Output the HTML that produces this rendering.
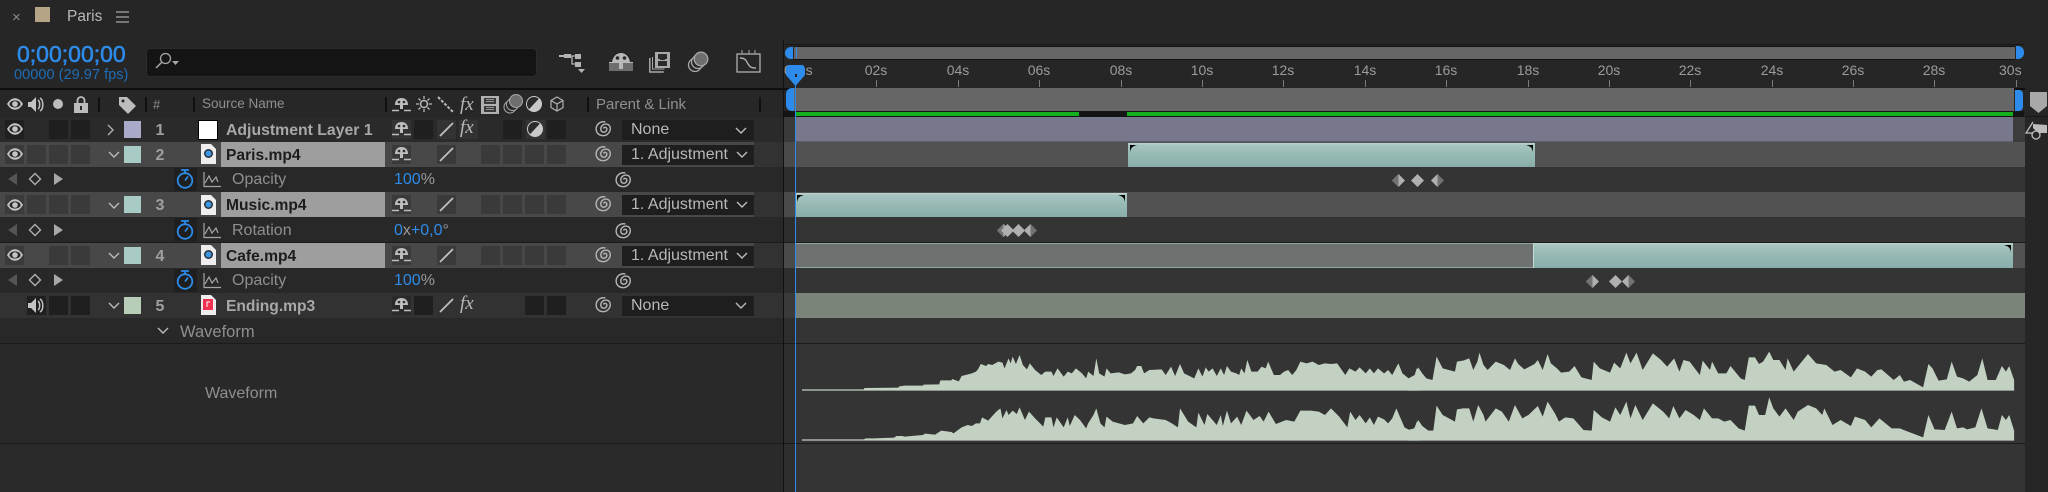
<!DOCTYPE html>
<html><head><meta charset="utf-8"><title>Paris</title>
<style>
html,body{margin:0;padding:0;background:#262626;width:2048px;height:492px;overflow:hidden}
body{position:relative;font-family:"Liberation Sans",sans-serif;color:#a0a0a0}
div,span,svg{position:absolute;display:block}
.t{white-space:nowrap;line-height:1}
.row{left:0;width:2025px;height:25px;border-bottom:1px solid #1b1b1b}
.sel{background:#484848}.prop{background:#282828}
.tl{left:795px;width:1218px;height:25px;top:0}
.box{width:19px;height:19px;top:3px;background:#3a3a3a}
.dk{background:#1f1f1f}
.num{left:153px;top:5px;font-size:16px;font-weight:bold;color:#a0a0a0;width:14px;text-align:center}
.lab{left:124px;top:4px;width:17px;height:17px}
.hl{left:221px;top:0;width:164px;height:25px;background:#9e9e9e}
.name{left:226px;top:5px;font-size:15.600px;font-weight:bold;color:#1c1c1c}
.dd{left:622px;top:3px;width:132px;height:20px;background:#1e1e1e;color:#b8b8b8;font-size:16px;line-height:20px;text-indent:9px;white-space:nowrap;overflow:hidden}
.pn{left:232px;top:5px;font-size:16px;color:#8f8f8f}
.teal{background:linear-gradient(#c0d4d0 0,#a6c5c0 2px,#9abcb7 40%,#88adaa 100%)}
.tick{top:80px;width:1px;height:7px;background:#7c7c7c}
.lb{top:63px;font-size:14px;color:#9b9b9b;width:40px;text-align:center;line-height:14px}
</style></head><body>
<svg width="0" height="0" style="left:0;top:0"><defs>
<symbol id="eye" viewBox="0 0 16 12"><path d="M0 6C3 1 6 .3 8 .3S13 1 16 6C13 11 10 11.7 8 11.7S3 11 0 6Z" fill="#c4c4c4"/><ellipse cx="8" cy="6" rx="5.600" ry="3.600" fill="#2a2a2a"/><circle cx="8" cy="6" r="2.800" fill="#c4c4c4"/></symbol>
<symbol id="spk" viewBox="0 0 17 17"><path d="M0 6h3l5-5v15l-5-5H0Z" fill="#c4c4c4"/><path d="M10 4c2 1.500 2.500 7 0 9M12 2c3.500 2 4 11 0 13" fill="none" stroke="#c4c4c4" stroke-width="1.500"/></symbol>
<symbol id="shy" viewBox="0 0 19 16"><path d="M3 8C3 3 6 1 9.500 1S16 3 16 8Z" fill="#bdbdbd"/><circle cx="7" cy="5" r="1.300" fill="#2a2a2a"/><circle cx="12" cy="5" r="1.300" fill="#2a2a2a"/><path d="M8 7h3v5H8Z" fill="#bdbdbd"/><path d="M0 13.500h7M12 13.500h7" stroke="#bdbdbd" stroke-width="1.400"/></symbol>
<symbol id="sp" viewBox="0 0 18 18"><path d="M11 1.500C5 .5 1 4.500 1.200 9.500 1.500 14 5.500 16.700 10 16 14 15.300 17 11 16 7 15 3.500 10.500 2.800 7.800 5.200 5.300 7.500 5.600 11.500 8.500 12.300 11 13 13.300 10.500 12.300 8.300 11.500 6.700 9.500 7 9 8.500" fill="none" stroke="#b4b4b4" stroke-width="1.500"/></symbol>
<symbol id="slash" viewBox="0 0 19 19"><path d="M3 16L16 3" stroke="#c0c0c0" stroke-width="1.800"/></symbol>
<symbol id="dl" viewBox="0 0 13 13"><path d="M6.500 0L13 6.500 6.500 13 0 6.500Z" fill="#b0b0b0"/><path d="M6.500 0V13L0 6.500Z" fill="#727272"/></symbol>
<symbol id="dr" viewBox="0 0 13 13"><path d="M6.500 0L13 6.500 6.500 13 0 6.500Z" fill="#727272"/><path d="M6.500 0V13L0 6.500Z" fill="#b0b0b0"/></symbol>
<symbol id="df" viewBox="0 0 13 13"><path d="M6.500 0L13 6.500 6.500 13 0 6.500Z" fill="#b0b0b0"/></symbol>
<symbol id="nav" viewBox="0 0 56 14"><path d="M9 1L0 7l9 6Z" fill="#555"/><path d="M27 1.500l5.500 5.500-5.500 5.500-5.500-5.500Z" fill="none" stroke="#b0b0b0" stroke-width="1.400"/><path d="M46 1l9 6-9 6Z" fill="#a8a8a8"/></symbol>
<symbol id="sw" viewBox="0 0 18 20"><circle cx="9" cy="11.500" r="7.300" fill="none" stroke="#2d8ceb" stroke-width="1.800"/><path d="M5 1h8M9 1v3M9 11.500l3-4" stroke="#2d8ceb" stroke-width="1.700" fill="none"/></symbol>
<symbol id="gr" viewBox="0 0 18 16"><path d="M1 0v14.500h17M2 11l4-7 3 6 4-5 2 5" fill="none" stroke="#a6a6a6" stroke-width="1.200"/></symbol>
<symbol id="doc" viewBox="0 0 15 20"><path d="M0 0h10l5 5v15H0Z" fill="#eee"/><circle cx="7.500" cy="9.500" r="4.500" fill="#2a2f3a"/><circle cx="7.500" cy="9.500" r="3" fill="#3a97e0"/></symbol>
<symbol id="chd" viewBox="0 0 12 7"><path d="M1 1l5 5 5-5" fill="none" stroke="#bcbcbc" stroke-width="1.400"/></symbol>
<symbol id="half" viewBox="0 0 16 16"><circle cx="8" cy="8" r="7.500" fill="#c8c8c8"/><path d="M.5 8A7.500 7.500 0 0 1 13 2.500L2.800 13.500A7.500 7.500 0 0 1 .5 8Z" fill="#2a2a2a"/><circle cx="8" cy="8" r="7.500" fill="none" stroke="#c8c8c8"/></symbol>
</defs></svg>

<!-- title bar -->
<div class="t" style="left:12px;top:10px;font-size:15px;color:#8a8a8a">×</div>
<div style="left:35px;top:7px;width:15px;height:15px;background:#b5a586"></div>
<div class="t" style="left:67px;top:9px;font-size:15.500px;color:#b8b8b8">Paris</div>
<svg style="left:116px;top:11px" width="13" height="12"><path d="M0 1h13M0 6h13M0 11h13" stroke="#a8a8a8" stroke-width="1.200"/></svg>
<div class="t" style="left:17px;top:43px;font-size:23px;color:#2d8ceb;-webkit-text-stroke:.5px #2d8ceb">0;00;00;00</div>
<div class="t" style="left:14px;top:68px;font-size:14.600px;color:#1f6db5">00000 (29.97 fps)</div>
<div style="left:146px;top:48px;width:389px;height:27px;background:#141414;border:1px solid #2c2c2c;border-radius:4px"></div>
<svg style="left:155px;top:52px" width="26" height="18"><circle cx="10.500" cy="6.500" r="5" fill="none" stroke="#a8a8a8" stroke-width="1.300"/><path d="M6.500 10.500L1 16" stroke="#a8a8a8" stroke-width="1.500"/><path d="M17 9h7l-3.500 4Z" fill="#a8a8a8"/></svg>

<!-- toolbar icons -->
<svg style="left:559px;top:52px" width="26" height="21"><path d="M0 4h6" stroke="#b4b4b4" stroke-width="2"/><rect x="5" y="2" width="7" height="4" fill="#b4b4b4"/><rect x="16" y="2" width="6" height="5" fill="#b4b4b4"/><rect x="16" y="10" width="6" height="5" fill="#b4b4b4"/><path d="M12 4h4M13 4v8h3" fill="none" stroke="#b4b4b4" stroke-width="1.300"/><path d="M19 17h7l-3.500 4Z" fill="#b4b4b4"/></svg>
<svg style="left:609px;top:53px" width="25" height="19"><path d="M0 9h24v9H0Z" fill="#6e6e6e"/><path d="M0 9h3C4 3 8 0 12 0S20 3 21 9h3v1H0Z" fill="#b8b8b8"/><circle cx="8.500" cy="5" r="1.800" fill="#2a2a2a"/><circle cx="15.500" cy="5" r="1.800" fill="#2a2a2a"/><path d="M10 9h4v7h-4Z" fill="#b8b8b8"/></svg>
<svg style="left:649px;top:52px" width="21" height="21"><path d="M.8 6v14h14" fill="none" stroke="#a8a8a8" stroke-width="1.500"/><path d="M3.500 5v12h12" fill="none" stroke="#a8a8a8" stroke-width="1"/><rect x="6" y="0" width="15" height="16" fill="#a8a8a8"/><path d="M9 2h9v5H9ZM9 9h9v5H9Z" fill="#2a2a2a"/><path d="M11 7.500h5" stroke="#2a2a2a"/></svg>
<svg style="left:687px;top:51px" width="22" height="21"><circle cx="8" cy="14" r="6.500" fill="#262626" stroke="#a8a8a8" stroke-width="1.300"/><circle cx="11" cy="11" r="6.500" fill="#262626" stroke="#a8a8a8" stroke-width="1.300"/><circle cx="14" cy="8" r="6.800" fill="#6e6e6e" stroke="#a8a8a8" stroke-width="1.300"/></svg>
<svg style="left:736px;top:50px" width="25" height="23"><rect x="1" y="4" width="23" height="18" fill="none" stroke="#b0b0b0" stroke-width="1.300"/><path d="M4 8c5 0 6 2 8 6 2 3 3 4 8 4" fill="none" stroke="#b0b0b0" stroke-width="1.400"/><path d="M6 0v4M13 0v4M19 0v4" stroke="#a8a8a8"/></svg>

<!-- column header -->
<div style="left:0;top:88px;width:2025px;height:2px;background:#0f0f0f"></div>
<div style="left:0;top:90px;width:783px;height:26px;background:#272727"></div>
<svg style="left:7px;top:98px" width="16" height="12"><use href="#eye"/></svg>
<svg style="left:28px;top:96px" width="17" height="17"><use href="#spk"/></svg>
<div style="left:53px;top:99px;width:10px;height:10px;border-radius:50%;background:#bcbcbc"></div>
<svg style="left:74px;top:96px" width="14" height="17"><path d="M3.500 8V4.500a3.500 3.500 0 0 1 7 0V8" fill="none" stroke="#bcbcbc" stroke-width="1.800"/><rect y="7" width="14" height="10" fill="#bcbcbc"/><rect x="6" y="10" width="2" height="4" fill="#272727"/></svg>
<svg style="left:118px;top:96px" width="19" height="19"><path d="M1 1h8l9 9-8 8-9-9Z" fill="#bdbdbd"/><circle cx="5" cy="5" r="1.500" fill="#272727"/></svg>
<div style="left:98px;top:97px;width:2px;height:15px;background:#101010"></div>
<div style="left:145px;top:97px;width:2px;height:15px;background:#101010"></div>
<div style="left:193px;top:97px;width:2px;height:15px;background:#101010"></div>
<div style="left:385px;top:97px;width:2px;height:15px;background:#101010"></div>
<div style="left:587px;top:97px;width:2px;height:15px;background:#101010"></div>
<div style="left:759px;top:97px;width:2px;height:15px;background:#101010"></div>
<div class="t" style="left:153px;top:98px;font-size:13px;color:#8f8f8f">#</div>
<div class="t" style="left:202px;top:97px;font-size:13.500px;color:#8f8f8f">Source Name</div>
<svg style="left:392px;top:97px" width="19" height="16"><use href="#shy"/></svg>
<svg style="left:416px;top:96px" width="16" height="16"><circle cx="8" cy="8" r="3.500" fill="none" stroke="#b8b8b8" stroke-width="1.500"/><path d="M8 0v3M8 13v3M0 8h3M13 8h3M2.500 2.500l2 2M11.500 11.500l2 2M2.500 13.500l2-2M11.500 4.500l2-2" stroke="#b8b8b8" stroke-width="1.300"/></svg>
<svg style="left:437px;top:96px" width="17" height="17"><path d="M1 1L16 16" stroke="#b8b8b8" stroke-width="2" stroke-dasharray="3 1.500"/></svg>
<div class="t" style="left:460px;top:95px;font-size:19px;font-family:'Liberation Serif',serif;font-style:italic;color:#b8b8b8">fx</div>
<svg style="left:481px;top:96px" width="18" height="18"><rect width="18" height="18" fill="#b0b0b0"/><path d="M3 2h12v6H3ZM3 10h12v6H3Z" fill="#3a3a3a"/><path d="M5 3.500h8M5 5.500h8M5 11.500h8M5 13.500h8" stroke="#b0b0b0" stroke-width=".7"/></svg>
<svg style="left:503px;top:94px" width="20" height="20"><circle cx="7" cy="13" r="6" fill="#272727" stroke="#a8a8a8"/><circle cx="9.500" cy="10.500" r="6" fill="#272727" stroke="#a8a8a8"/><circle cx="13" cy="7" r="6.500" fill="#6e6e6e" stroke="#a8a8a8"/></svg>
<svg style="left:526px;top:96px" width="16" height="16"><use href="#half"/></svg>
<svg style="left:550px;top:96px" width="14" height="16"><path d="M7 1l6 3.500v7L7 15l-6-3.500v-7ZM1 4.500L7 8l6-3.500M7 8v7" fill="none" stroke="#b0b0b0" stroke-width="1.200"/></svg>
<div class="t" style="left:596px;top:97px;font-size:15px;color:#8f8f8f">Parent &amp; Link</div>

<!-- timeline header -->
<div style="left:785px;top:44px;width:1239px;height:15px;border-top:1px solid #161616"></div>
<div style="left:794px;top:46px;width:1221px;height:12px;background:#666;border:1px solid #111;border-width:1px 0"></div>
<div style="left:796px;top:47px;width:1px;height:11px;background:#2d8ceb"></div>
<div style="left:785px;top:47px;width:8px;height:12px;background:#2d8ceb;border-radius:6px 0 0 6px"></div>
<div style="left:2016px;top:46px;width:8px;height:13px;background:#2d8ceb;border-radius:0 6px 6px 0"></div>
<div class="lb" style="left:784px;text-align:left;letter-spacing:3px">00s</div>
<div class="lb" style="left:856px">02s</div><div class="lb" style="left:938px">04s</div><div class="lb" style="left:1019px">06s</div><div class="lb" style="left:1101px">08s</div><div class="lb" style="left:1182px">10s</div><div class="lb" style="left:1263px">12s</div><div class="lb" style="left:1345px">14s</div><div class="lb" style="left:1426px">16s</div><div class="lb" style="left:1508px">18s</div><div class="lb" style="left:1589px">20s</div><div class="lb" style="left:1670px">22s</div><div class="lb" style="left:1752px">24s</div><div class="lb" style="left:1833px">26s</div><div class="lb" style="left:1914px">28s</div><div class="lb" style="left:1994px;width:31px;overflow:hidden;text-align:left;text-indent:5px">30s</div>
<div class="tick" style="left:876px"></div><div class="tick" style="left:958px"></div><div class="tick" style="left:1039px"></div><div class="tick" style="left:1121px"></div><div class="tick" style="left:1202px"></div><div class="tick" style="left:1283px"></div><div class="tick" style="left:1365px"></div><div class="tick" style="left:1446px"></div><div class="tick" style="left:1528px"></div><div class="tick" style="left:1609px"></div><div class="tick" style="left:1690px"></div><div class="tick" style="left:1772px"></div><div class="tick" style="left:1853px"></div><div class="tick" style="left:1934px"></div><div class="tick" style="left:2016px"></div>
<div style="left:793px;top:88px;width:1221px;height:23px;background:#666"></div>
<div style="left:786px;top:88px;width:8px;height:23px;background:#2d8ceb;border-radius:6px 0 0 6px"></div>
<div style="left:2015px;top:90px;width:8px;height:21px;background:#2d8ceb;border-radius:0 4px 4px 0"></div>
<div style="left:784px;top:111px;width:1240px;height:6px;background:#141414"></div>
<div style="left:795px;top:112px;width:284px;height:4px;background:#14b01e"></div>
<div style="left:1127px;top:112px;width:886px;height:4px;background:#14b01e"></div>

<!-- rows -->
<div class="row" style="top:117px;background:#2a2a2a">
 <div class="box dk" style="left:5px"></div><div class="box dk" style="left:49px"></div><div class="box dk" style="left:71px"></div>
 <svg style="left:7px;top:6px" width="16" height="12"><use href="#eye"/></svg>
 <svg style="left:107px;top:7px" width="7" height="12"><path d="M1 1l5 5-5 5" fill="none" stroke="#b0b0b0" stroke-width="1.400"/></svg>
 <div class="lab" style="background:#a9a9c9;top:4px"></div>
 <div class="num">1</div>
 <div style="left:198px;top:3px;width:18px;height:18px;background:#fff;border:1px solid #000"></div>
 <div class="name" style="color:#a8a8a8;font-size:15.800px">Adjustment Layer 1</div>
 <div class="box" style="left:392px;background:#333"></div><div class="box dk" style="left:414px"></div><div class="box" style="left:437px;background:#333"></div><div class="box" style="left:459px;background:#333"></div><div class="box dk" style="left:503px"></div><div class="box" style="left:526px;background:#333"></div><div class="box dk" style="left:547px"></div>
 <svg style="left:392px;top:4px" width="19" height="16"><use href="#shy"/></svg>
 <svg style="left:437px;top:3px" width="19" height="19"><use href="#slash"/></svg>
 <div class="t" style="left:460px;top:1px;font-size:19px;font-family:'Liberation Serif',serif;font-style:italic;color:#b8b8b8">fx</div>
 <svg style="left:527px;top:4px" width="16" height="16"><use href="#half"/></svg>
 <svg style="left:595px;top:3px" width="17" height="18"><use href="#sp"/></svg>
 <div class="dd">None</div><svg style="left:735px;top:10px" width="12" height="7"><use href="#chd"/></svg>
 <div style="left:783px;width:12px;height:25px;top:0;background:#3a3a3a"></div>
 <div style="left:795px;width:1218px;height:24px;top:0;background:#77788c;border-bottom:1px solid #5c5d6e"></div>
 <div style="left:2013px;width:12px;height:25px;top:0;background:#3c3c3c"></div>
</div>

<div class="row sel" style="top:142px">
 <div class="box" style="left:5px"></div><div class="box" style="left:27px"></div><div class="box" style="left:49px"></div><div class="box" style="left:71px"></div>
 <svg style="left:7px;top:6px" width="16" height="12"><use href="#eye"/></svg>
 <svg style="left:108px;top:9px" width="12" height="7"><use href="#chd"/></svg>
 <div class="lab" style="background:#a9cbc6"></div><div class="num">2</div>
 <svg style="left:201px;top:2px" width="15" height="20"><use href="#doc"/></svg>
 <div class="hl"></div><div class="name">Paris.mp4</div>
 <div class="box" style="left:392px"></div><div class="box" style="left:437px"></div><div class="box" style="left:481px"></div><div class="box" style="left:503px"></div><div class="box" style="left:525px"></div><div class="box" style="left:547px"></div>
 <svg style="left:392px;top:4px" width="19" height="16"><use href="#shy"/></svg>
 <svg style="left:437px;top:3px" width="19" height="19"><use href="#slash"/></svg>
 <svg style="left:595px;top:3px" width="17" height="18"><use href="#sp"/></svg>
 <div class="dd">1. Adjustment</div><svg style="left:736px;top:9px" width="12" height="7"><use href="#chd"/></svg>
 <div style="left:754px;width:29px;height:25px;top:0;background:#323232"></div>
 <div style="left:783px;width:12px;height:25px;top:0;background:#4a4a4a"></div>
 <div style="left:795px;width:1230px;height:25px;top:0;background:#525252"></div>
 <div class="teal" style="left:1128px;top:1px;width:407px;height:24px"></div>
 <svg style="left:1128px;top:1px" width="407" height="24"><path d="M2 2h7Q3 3 2 9Z" fill="#000"/><path d="M405 2h-7Q404 3 405 9Z" fill="#000"/></svg>
</div>

<div class="row prop" style="top:167px">
 <svg style="left:8px;top:5px" width="56" height="14"><use href="#nav"/></svg>
 <div style="left:174px;top:1px;width:23px;height:23px;background:#1f1f1f"></div>
 <svg style="left:176px;top:2px" width="18" height="20"><use href="#sw"/></svg>
 <svg style="left:203px;top:5px" width="18" height="16"><use href="#gr"/></svg>
 <div class="t pn">Opacity</div>
 <div class="t" style="left:394px;top:5px;font-size:16px;color:#2d8ceb">100<span style="position:static;display:inline;color:#9a9a9a">%</span></div>
 <svg style="left:615px;top:4px" width="17" height="18"><use href="#sp"/></svg>
 <div style="left:784px;width:11px;height:25px;top:0;background:#2e2e2e"></div>
 <div style="left:795px;width:1230px;height:25px;top:0;background:#343434"></div>
 <svg style="left:1392px;top:7px" width="13" height="13"><use href="#dl"/></svg>
 <svg style="left:1411px;top:7px" width="13" height="13"><use href="#df"/></svg>
 <svg style="left:1431px;top:7px" width="13" height="13"><use href="#dr"/></svg>
</div>

<div class="row sel" style="top:192px">
 <div class="box" style="left:5px"></div><div class="box" style="left:27px"></div><div class="box" style="left:49px"></div><div class="box" style="left:71px"></div>
 <svg style="left:7px;top:7px" width="16" height="12"><use href="#eye"/></svg>
 <svg style="left:108px;top:10px" width="12" height="7"><use href="#chd"/></svg>
 <div class="lab" style="background:#a9cbc6"></div><div class="num">3</div>
 <svg style="left:201px;top:3px" width="15" height="20"><use href="#doc"/></svg>
 <div class="hl"></div><div class="name">Music.mp4</div>
 <div class="box" style="left:392px"></div><div class="box" style="left:437px"></div><div class="box" style="left:481px"></div><div class="box" style="left:503px"></div><div class="box" style="left:525px"></div><div class="box" style="left:547px"></div>
 <svg style="left:392px;top:5px" width="19" height="16"><use href="#shy"/></svg>
 <svg style="left:437px;top:3px" width="19" height="19"><use href="#slash"/></svg>
 <svg style="left:595px;top:3px" width="17" height="18"><use href="#sp"/></svg>
 <div class="dd">1. Adjustment</div><svg style="left:736px;top:9px" width="12" height="7"><use href="#chd"/></svg>
 <div style="left:754px;width:29px;height:25px;top:0;background:#323232"></div>
 <div style="left:783px;width:12px;height:25px;top:0;background:#4a4a4a"></div>
 <div style="left:795px;width:1230px;height:25px;top:0;background:#525252"></div>
 <div class="teal" style="left:795px;top:1px;width:332px;height:24px"></div>
 <svg style="left:795px;top:1px" width="332" height="24"><path d="M2 2h7Q3 3 2 9Z" fill="#000"/><path d="M330 2h-7Q329 3 330 9Z" fill="#000"/></svg>
</div>

<div class="row prop" style="top:217px">
 <svg style="left:8px;top:6px" width="56" height="14"><use href="#nav"/></svg>
 <div style="left:174px;top:1px;width:23px;height:23px;background:#1f1f1f"></div>
 <svg style="left:176px;top:3px" width="18" height="20"><use href="#sw"/></svg>
 <svg style="left:203px;top:6px" width="18" height="16"><use href="#gr"/></svg>
 <div class="t pn" style="top:6px">Rotation</div>
 <div class="t" style="left:394px;top:6px;font-size:16px;color:#2d8ceb">0<span style="position:static;display:inline;color:#9a9a9a">x</span>+0,0<span style="position:static;display:inline;color:#9a9a9a">°</span></div>
 <svg style="left:615px;top:5px" width="17" height="18"><use href="#sp"/></svg>
 <div style="left:784px;width:11px;height:25px;top:0;background:#2e2e2e"></div>
 <div style="left:795px;width:1230px;height:25px;top:0;background:#343434"></div>
 <svg style="left:997px;top:7px" width="13" height="13"><use href="#dl"/></svg>
 <svg style="left:1001px;top:7px" width="13" height="13"><use href="#df"/></svg>
 <svg style="left:1012px;top:7px" width="13" height="13"><use href="#df"/></svg>
 <svg style="left:1024px;top:7px" width="13" height="13"><use href="#dr"/></svg>
</div>

<div class="row sel" style="top:243px">
 <div class="box" style="left:5px"></div><div class="box" style="left:49px"></div><div class="box" style="left:71px"></div>
 <svg style="left:7px;top:6px" width="16" height="12"><use href="#eye"/></svg>
 <svg style="left:108px;top:9px" width="12" height="7"><use href="#chd"/></svg>
 <div class="lab" style="background:#a9cbc6"></div><div class="num">4</div>
 <svg style="left:201px;top:2px" width="15" height="20"><use href="#doc"/></svg>
 <div class="hl"></div><div class="name">Cafe.mp4</div>
 <div class="box" style="left:392px"></div><div class="box" style="left:437px"></div><div class="box" style="left:481px"></div><div class="box" style="left:503px"></div><div class="box" style="left:525px"></div><div class="box" style="left:547px"></div>
 <svg style="left:392px;top:4px" width="19" height="16"><use href="#shy"/></svg>
 <svg style="left:437px;top:3px" width="19" height="19"><use href="#slash"/></svg>
 <svg style="left:595px;top:3px" width="17" height="18"><use href="#sp"/></svg>
 <div class="dd">1. Adjustment</div><svg style="left:736px;top:9px" width="12" height="7"><use href="#chd"/></svg>
 <div style="left:754px;width:29px;height:25px;top:0;background:#323232"></div>
 <div style="left:783px;width:12px;height:25px;top:0;background:#4a4a4a"></div>
 <div style="left:795px;width:1230px;height:25px;top:0;background:#525252"></div>
 <div style="left:795px;top:0;width:738px;height:23px;background:#6d7270;border-top:1px solid #8fa5a1;border-bottom:1px solid #8fa5a1"></div>
 <div style="left:1533px;top:0;width:1px;height:25px;background:#c8d8d5"></div>
 <div class="teal" style="left:1534px;top:0;width:479px;height:25px"></div>
 <svg style="left:2000px;top:0" width="13" height="25"><path d="M11 2H4Q10 3 11 9Z" fill="#000"/></svg>
</div>

<div class="row prop" style="top:268px">
 <svg style="left:8px;top:5px" width="56" height="14"><use href="#nav"/></svg>
 <div style="left:174px;top:1px;width:23px;height:23px;background:#1f1f1f"></div>
 <svg style="left:176px;top:2px" width="18" height="20"><use href="#sw"/></svg>
 <svg style="left:203px;top:5px" width="18" height="16"><use href="#gr"/></svg>
 <div class="t pn">Opacity</div>
 <div class="t" style="left:394px;top:5px;font-size:16px;color:#2d8ceb">100<span style="position:static;display:inline;color:#9a9a9a">%</span></div>
 <svg style="left:615px;top:4px" width="17" height="18"><use href="#sp"/></svg>
 <div style="left:784px;width:11px;height:25px;top:0;background:#2e2e2e"></div>
 <div style="left:795px;width:1230px;height:25px;top:0;background:#343434"></div>
 <svg style="left:1586px;top:7px" width="13" height="13"><use href="#dl"/></svg>
 <svg style="left:1609px;top:7px" width="13" height="13"><use href="#df"/></svg>
 <svg style="left:1622px;top:7px" width="13" height="13"><use href="#dr"/></svg>
</div>

<div class="row" style="top:293px;background:#323232">
 <div class="box dk" style="left:27px"></div><div class="box dk" style="left:49px"></div><div class="box dk" style="left:71px"></div>
 <svg style="left:28px;top:4px" width="17" height="17"><use href="#spk"/></svg>
 <svg style="left:108px;top:9px" width="12" height="7"><use href="#chd"/></svg>
 <div class="lab" style="background:#b7cdb7"></div><div class="num">5</div>
 <svg style="left:201px;top:2px" width="15" height="20"><path d="M0 0h10l5 5v15H0Z" fill="#eee"/><rect x="2" y="4" width="10" height="11" fill="#f0304f"/><path d="M6 12V7h3" fill="none" stroke="#fff"/></svg>
 <div class="name" style="color:#a8a8a8">Ending.mp3</div>
 <div class="box dk" style="left:392px;background:#2a2a2a"></div><div class="box dk" style="left:414px"></div><div class="box dk" style="left:525px"></div><div class="box dk" style="left:547px"></div>
 <svg style="left:392px;top:4px" width="19" height="16"><use href="#shy"/></svg>
 <svg style="left:437px;top:3px" width="19" height="19"><use href="#slash"/></svg>
 <div class="t" style="left:460px;top:1px;font-size:19px;font-family:'Liberation Serif',serif;font-style:italic;color:#b8b8b8">fx</div>
 <svg style="left:595px;top:3px" width="17" height="18"><use href="#sp"/></svg>
 <div class="dd">None</div><svg style="left:735px;top:9px" width="12" height="7"><use href="#chd"/></svg>
 <div style="left:783px;width:12px;height:25px;top:0;background:#3a3a3a"></div>
 <div style="left:795px;width:1230px;height:25px;top:0;background:#7a8478"></div>
</div>

<div class="row prop" style="top:318px">
 <svg style="left:157px;top:9px" width="12" height="7"><use href="#chd"/></svg>
 <div class="t" style="left:180px;top:6px;font-size:16.500px;color:#8f8f8f">Waveform</div>
 <div style="left:784px;width:11px;height:25px;top:0;background:#2e2e2e"></div>
 <div style="left:795px;width:1230px;height:25px;top:0;background:#343434"></div>
</div>

<!-- waveform area -->
<div style="left:0;top:344px;width:784px;height:99px;background:#292929;border-bottom:1px solid #1b1b1b"></div>
<div style="left:784px;top:344px;width:11px;height:99px;background:#2e2e2e;border-bottom:1px solid #1b1b1b"></div>
<div style="left:795px;top:344px;width:1230px;height:99px;background:#343434;border-bottom:1px solid #1b1b1b"></div>
<div class="t" style="left:205px;top:386px;font-size:16px;color:#8f8f8f">Waveform</div>
<div style="left:0;top:444px;width:784px;height:48px;background:#2a2a2a"></div>
<div style="left:784px;top:444px;width:11px;height:48px;background:#2e2e2e"></div>
<div style="left:795px;top:444px;width:1230px;height:48px;background:#343434"></div>
<svg style="left:0;top:0" width="2048" height="492">
<g fill="#c2d1c2">
<g transform="translate(780 340) scale(.40816 .33333)">
<polygon points="54,148 205,148 207,144 290,143 292,139 305,137 350,137 352,134 390,133 393,121 420,121 422,117 438,124 445,108 470,100 480,95 485,88 492,72 505,78 510,72 520,75 535,65 545,68 550,85 560,55 565,70 570,50 578,72 587,45 595,75 605,88 612,70 625,90 640,105 650,95 665,95 670,108 680,85 695,110 705,95 715,100 725,85 740,100 750,115 755,95 768,108 775,55 782,100 795,110 800,85 810,100 830,97 845,103 860,100 870,90 875,78 885,78 892,100 905,90 935,88 945,105 958,80 968,108 980,72 990,100 1015,115 1025,85 1035,110 1043,82 1050,95 1060,85 1070,108 1080,85 1088,105 1095,78 1105,95 1118,100 1125,105 1130,85 1138,100 1145,60 1155,95 1170,95 1180,80 1190,85 1196,65 1210,105 1225,105 1235,95 1245,90 1255,105 1265,90 1275,65 1290,70 1305,65 1320,75 1335,70 1350,72 1365,70 1385,105 1395,85 1410,95 1420,82 1435,100 1445,85 1455,100 1465,85 1480,100 1490,90 1500,105 1515,70 1525,100 1540,115 1555,105 1560,85 1568,90 1568,152 54,152"/>
<polygon points="54,298 205,298 210,295 230,295 280,293 285,288 300,288 305,290 350,285 355,281 380,284 395,272 420,276 425,280 445,262 460,255 470,258 480,250 490,250 495,232 510,242 530,215 540,205 545,235 555,210 560,225 570,212 580,222 587,202 600,240 610,215 625,235 645,260 650,232 665,232 670,262 678,232 695,262 705,232 710,258 722,225 735,240 750,265 755,250 768,225 775,205 785,250 795,262 800,230 815,245 845,255 865,250 875,228 890,250 905,232 915,235 945,240 960,250 975,262 980,205 1000,245 1020,262 1025,218 1040,255 1047,222 1070,255 1080,225 1085,258 1095,212 1105,250 1120,230 1130,255 1143,212 1160,240 1175,228 1185,245 1197,215 1215,252 1240,240 1260,245 1275,212 1300,212 1320,215 1335,225 1350,205 1370,230 1390,262 1397,215 1410,240 1420,225 1435,250 1445,232 1455,255 1465,230 1480,238 1490,250 1500,235 1510,205 1530,262 1545,272 1555,265 1560,245 1568,250 1568,302 54,302"/>
</g>
<g transform="translate(1408 340) scale(.40816 .33333)">
<polygon points="0,118 12,115 20,100 25,82 35,100 45,115 60,120 70,50 85,85 100,90 115,95 120,65 135,62 150,55 160,90 170,65 175,38 185,75 195,90 215,65 235,75 250,90 262,55 270,72 285,88 310,72 318,60 330,90 342,42 350,70 365,85 375,98 395,95 408,78 425,112 450,120 455,65 470,85 495,98 505,68 520,85 535,38 545,70 560,38 575,90 600,40 620,60 635,80 652,55 665,95 675,60 690,65 715,105 722,62 740,90 745,65 760,100 780,100 790,78 815,115 825,120 835,52 850,52 860,72 870,65 885,35 895,60 910,60 925,90 930,55 945,95 980,42 1000,70 1025,75 1045,95 1060,90 1085,112 1100,85 1120,95 1135,110 1150,90 1160,88 1190,120 1205,105 1215,125 1230,120 1262,142 1275,72 1285,85 1300,122 1320,118 1332,65 1345,110 1360,115 1375,125 1395,105 1407,55 1420,120 1440,120 1455,78 1465,95 1473,78 1485,120 1485,152 0,152"/>
<polygon points="0,270 15,265 25,240 35,258 50,272 62,272 70,197 85,225 115,245 120,208 135,205 150,205 160,245 172,195 185,225 190,245 215,205 230,215 247,245 262,195 280,235 295,225 318,198 330,230 342,185 360,220 370,245 385,232 405,235 430,270 450,272 455,210 475,232 495,245 508,202 520,225 535,185 545,235 557,195 575,240 600,190 625,215 640,235 650,198 665,235 680,210 700,225 715,240 725,205 745,235 760,235 775,245 790,240 810,265 825,272 835,197 850,197 860,225 875,225 885,172 895,205 910,230 925,205 945,240 955,215 980,195 1000,205 1015,225 1020,205 1040,255 1060,240 1085,258 1095,230 1120,240 1135,262 1155,235 1185,265 1205,265 1225,275 1262,292 1275,225 1290,268 1315,270 1332,215 1345,265 1360,262 1370,268 1390,262 1405,205 1420,265 1445,270 1455,225 1465,240 1473,225 1485,272 1485,302 0,302"/>
</g>
</g>
</svg>

<!-- panel divider -->
<div style="left:783px;top:40px;width:1px;height:452px;background:#111"></div>
<div style="left:2025px;top:40px;width:23px;height:452px;background:#262626"></div>
<svg style="left:2030px;top:92px" width="17" height="21"><path d="M0 0h17v14l-8.500 7L0 14Z" fill="#a8a8a8"/></svg>
<div style="left:2025px;top:116px;width:23px;height:1px;background:#161616"></div>
<svg style="left:2025px;top:120px" width="23" height="21"><path d="M8 2L1 13h9" fill="none" stroke="#c0c0c0" stroke-width="1.300"/><path d="M8 4l14 1v8h-9l-5-5Z" fill="#bcbcbc"/><circle cx="11" cy="15" r="4" fill="#262626" stroke="#c0c0c0" stroke-width="1.300"/></svg>

<!-- playhead -->
<div style="left:795px;top:76px;width:1px;height:416px;background:#2d8ceb"></div>
<svg style="left:786px;top:65px" width="19" height="21"><path d="M2 0h15l2 3v7L9.500 21 0 10V3Z" fill="#2d8ceb"/><path d="M9 9h2v3H9Z" fill="#222"/></svg>
</body></html>
